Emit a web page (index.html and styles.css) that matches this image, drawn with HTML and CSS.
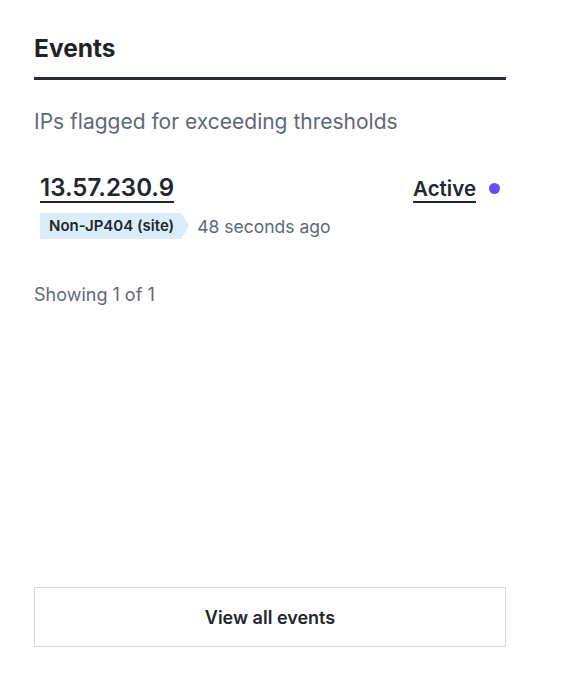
FILE: index.html
```html
<!DOCTYPE html>
<html>
<head>
    <title>Events</title>
    <link rel="stylesheet" href="styles.css">
</head>
<body>
    <div class="panel">
        <h2 class="panel-title">Events</h2>
        <p class="panel-sub">IPs flagged for exceeding thresholds</p>

        <div class="event-list">
            <div class="event">
                <div class="event-top">
                    <a class="event-ip" href="#">13.57.230.9</a>
                    <span class="event-status">
                        <a href="#">Active</a>
                        <span class="dot"></span>
                    </span>
                </div>
                <div class="event-meta">
                    <span class="tag">Non-JP404 (site)</span>
                    <span class="event-time">48 seconds ago</span>
                </div>
            </div>
        </div>

        <p class="showing">Showing 1 of 1</p>

        <div class="spacer"></div>

        <button class="view-all">View all events</button>
    </div>
</body>
</html>
```

FILE: styles.css
```css
body {
    margin: 0;
    padding: 0;
    font-family: Inter, "Noto Sans", sans-serif;
    background-color: #ffffff;
    color: #1f2329;
}

.panel {
    width: 472px;
    height: 647px;
    margin-left: 34px;
    display: flex;
    flex-direction: column;
}

.panel-title {
    margin: 0;
    padding-top: 33px;
    padding-bottom: 14px;
    font-size: 24.5px;
    font-weight: 700;
    line-height: 30px;
    border-bottom: 3px solid #272b33;
}

.panel-sub {
    margin: 0;
    padding-top: 30px;
    font-size: 21px;
    line-height: 24px;
    color: #5f6878;
}

.event-list {
    margin-top: 39px;
}

.event {
    padding: 0 6px;
}

.event-top {
    display: flex;
    justify-content: space-between;
    align-items: center;
}

.event-ip {
    font-size: 24px;
    font-weight: 600;
    line-height: 30px;
    color: #22262d;
    text-decoration: underline;
    text-underline-offset: 5px;
    text-decoration-thickness: 2px;
}

.event-status {
    display: flex;
    align-items: center;
    gap: 13px;
}

.event-status a {
    font-size: 20.5px;
    font-weight: 600;
    color: #22262d;
    text-decoration: underline;
    text-underline-offset: 5px;
    text-decoration-thickness: 2px;
}

.dot {
    width: 11px;
    height: 11px;
    border-radius: 50%;
    background-color: #6b4cf6;
}

.event-meta {
    display: flex;
    align-items: center;
    margin-top: 10px;
}

.tag {
    display: inline-block;
    height: 26px;
    line-height: 26px;
    padding: 0 15px 0 9px;
    font-size: 15px;
    font-weight: 600;
    color: #22262d;
    background-color: #dcedfa;
    clip-path: polygon(0 0, calc(100% - 8px) 0, 100% 50%, calc(100% - 8px) 100%, 0 100%);
}

.event-time {
    margin-left: 8px;
    font-size: 17.5px;
    color: #5f6878;
}

.showing {
    margin: 0;
    margin-top: 45px;
    font-size: 18px;
    line-height: 22px;
    color: #5f6878;
}

.spacer {
    flex: 1;
}

.view-all {
    width: 100%;
    height: 60px;
    background: #ffffff;
    border: 1px solid #d6d9de;
    font-family: Inter, "Noto Sans", sans-serif;
    font-size: 18px;
    font-weight: 600;
    color: #22262d;
    cursor: pointer;
}
```
